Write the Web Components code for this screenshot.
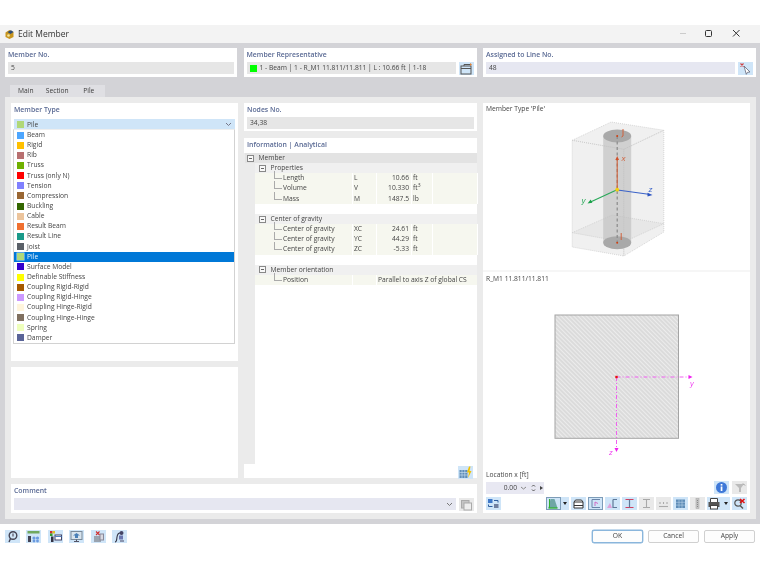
<!DOCTYPE html>
<html lang="en"><head><meta charset="utf-8"><title>Edit Member</title>
<style>
html,body{margin:0;padding:0;background:#fff;height:574px;overflow:hidden}
body{font:6.7px/10px "Open Sans","Noto Sans",sans-serif;color:#3c3c3c}
</style></head><body>
<em-dialog></em-dialog>
<script>
const ICONS={
 photo:'<rect x="2" y="4" width="10" height="8" fill="none" stroke="#555" stroke-width="1"/><path d="M2 6.5h10M5 4V2.5h7" stroke="#555" fill="none"/><path d="M11 1l2 1.500-2 1.500z" fill="#e08030"/>',
 pick:'<path d="M6 4l6 6-2.500.3-1.200 2L6 4z" fill="#fff" stroke="#667"  stroke-width=".8"/><path d="M2.500 1.500l3 3M5.500 1.500l-3 3" stroke="#d04040" stroke-width="1.100"/>',
 bolt:'<path d="M1.500 4h8v8h-8z" fill="#5f8db8"/><path d="M1.500 6.500h8M1.500 9h8M4 4v8M6.800 4v8" stroke="#cfe4f5" stroke-width=".6"/><path d="M11 .5L9 6.500h2L10 12l3.500-7h-2l1-4.500z" fill="#f2c200"/>',
 copy:'<rect x="2.500" y="2.500" width="7.500" height="7.500" fill="#c5c5c5" stroke="#aaa"/><rect x="5" y="5" width="7.500" height="7" fill="#eee" stroke="#aaa"/>',
 info:'<circle cx="7.500" cy="6.500" r="5.500" fill="#3e78d8"/><rect x="6.700" y="5.500" width="1.700" height="4.500" fill="#fff"/><rect x="6.700" y="3" width="1.700" height="1.600" fill="#fff"/>',
 filter:'<path d="M3 3h9L9 7v4H7V7z" fill="#bbb"/><path d="M11 2.500l2 2" stroke="#999"/>',
 swap:'<rect x="2" y="2" width="4.500" height="4" fill="#3f78c8"/><rect x="8" y="7" width="4.500" height="4" fill="#6f7f9f"/><path d="M8 3.500h4v2M6.500 9.500h-4v-2" fill="none" stroke="#2f5f9f"/>',
 view:'<path d="M4.500 2h4l3 9h-9z" fill="#6fa6a6"/><path d="M2.500 11h9" stroke="#30b030" stroke-width="1.300"/><path d="M3.500 2v9" stroke="#30b030" stroke-width="1"/>',
 print2:'<path d="M3 5h9v6H3zM3 5l1.500-2h6L12 5" fill="#fff" stroke="#333" stroke-width="1"/><path d="M3 8.500h9" stroke="#333"/>',
 sect1:'<path d="M4 2.500h8M4 2.500v8h8" fill="none" stroke="#6a84a8" stroke-width="1"/><path d="M7 5l3 1.500M7 5v4" stroke="#d060c0" stroke-width=".9"/>',
 sect2:'<path d="M8 2.500h4M8 2.500v8h4" fill="none" stroke="#5f7898" stroke-width="1.200"/><path d="M2 11l3-5 2 5z" fill="#e0a0d8"/>',
 sect3:'<path d="M3.500 2.500h8M3.500 10.500h8" stroke="#d04060" stroke-width="1.200"/><path d="M7.500 2.500v8" stroke="#5f7898" stroke-width="1.200"/>',
 sect4:'<path d="M4 2.500h7M4 10.500h7M7.500 2.500v8" stroke="#a8a8a8" stroke-width="1.100"/>',
 sect5:'<path d="M3 9.500h9" stroke="#aaa" stroke-width="1.100"/><path d="M4 5v2M7.500 5v2M11 5v2" stroke="#aaa" stroke-width="1.100"/>',
 grid:'<rect x="3" y="2.500" width="9" height="8.500" fill="#5f8db8"/><path d="M3 5.300h9M3 8.100h9M6 2.500v8.500M9 2.500v8.500" stroke="#b8d4ea" stroke-width=".6"/>',
 col:'<rect x="6" y="1.500" width="3" height="10" fill="#c4c4c4" stroke="#aaa" stroke-width=".6"/><path d="M7.500 3v7" stroke="#888" stroke-dasharray="1 1"/>',
 print:'<path d="M3.500 5V1.500h7V5" fill="#fff" stroke="#444"/><rect x="1.500" y="5" width="11" height="5" fill="#555"/><rect x="3.500" y="8.500" width="7" height="3.500" fill="#fff" stroke="#444"/>',
 x:'<circle cx="6" cy="6" r="3.200" fill="none" stroke="#555" stroke-width="1.200"/><path d="M8 8.500l3 3" stroke="#555" stroke-width="1.400"/><path d="M8 2l4.500 4M12.500 2L8 6" stroke="#e01010" stroke-width="1.600"/>',
 b1:'<circle cx="8" cy="5.500" r="3.800" fill="none" stroke="#445" stroke-width="1.400"/><path d="M5.500 8.500L4 12" stroke="#445" stroke-width="1.400"/><path d="M7.300 3.500h1.400v3H7.300z" fill="#667"/>',
 b2:'<rect x="1.500" y="1" width="12" height="2.500" fill="#70a860"/><rect x="2" y="6" width="3" height="6" fill="#445"/><circle cx="8" cy="8" r="1.600" fill="#6a9ae0"/><circle cx="11.500" cy="8" r="1.600" fill="#6a9ae0"/><circle cx="8" cy="11" r="1.400" fill="#6a9ae0"/><circle cx="11.500" cy="11" r="1.400" fill="#6a9ae0"/>',
 b3:'<rect x="2" y="1" width="2.500" height="2.500" fill="#d03030"/><rect x="4.500" y="1" width="2.500" height="2.500" fill="#e0c020"/><rect x="2" y="3.500" width="2.500" height="2.500" fill="#30a030"/><rect x="3" y="6.500" width="2.500" height="5.500" fill="#334"/><rect x="7" y="5" width="6.500" height="5" fill="#fff" stroke="#446"/><path d="M7 6.500h6.500" stroke="#5080c0"/>',
 b4:'<rect x="2" y="1.500" width="11" height="8" fill="#d8e4ee" stroke="#7a8a9a"/><path d="M7.500 3l3.500 2.500h-2v2.500h-3V5.500H4z" fill="#4a80b8"/><path d="M5 11.500h5M7.500 9.500v2" stroke="#556"/>',
 b5:'<rect x="3" y="6" width="7" height="6" fill="#9aa4b0"/><rect x="9" y="4" width="3.500" height="6" fill="#d8d8e0" stroke="#889"/><path d="M5 1.500l3.500 3.500M8.500 1.500L5 5" stroke="#d03030" stroke-width="1.100"/>',
 b6:'<path d="M3 12c2 0 1.500-2 2-5s1-4 3-4" fill="none" stroke="#334" stroke-width="1.100"/><rect x="7" y="5.500" width="4" height="4" fill="#6a76b0"/><circle cx="9.500" cy="3" r="2" fill="#446"/><path d="M8 11h4" stroke="#446"/>'
};
function def(name,css,render){
 customElements.define(name,class extends HTMLElement{
  connectedCallback(){
   if(this.shadowRoot)return;
   const s=this.attachShadow({mode:'open'});
   s.innerHTML='<style>'+css+'</style>'+render(this);
  }
 });
}
const a=(e,n,d='')=>e.getAttribute(n)??d;

def('em-icon',':host{display:block;flex:none;width:15px;height:13px;background:var(--b,#cfe5f8)}:host([grey]){--b:#e9e9e9}:host([flat]){--b:transparent}:host([on]){box-shadow:inset 0 0 0 1px #7d9cb8}svg{display:block;width:15px;height:13px}',
 e=>`<svg viewBox="0 0 15 13">${ICONS[a(e,'i')]||''}</svg>`);

def('em-panel',':host{display:block;background:#fff;padding:2px 3px 0;min-height:0;position:relative}h3{margin:0;font:600 6.9px/10px "Open Sans",sans-serif;color:#5a6a94;height:12px;padding-top:0}',
 e=>`<h3>${a(e,'t')}</h3><slot></slot>`);

def('em-input',':host{display:flex;align-items:center;height:12px;background:var(--bg,#e6e6e6);padding-left:3px;gap:3px;flex:1;min-width:0;color:#444}:host([lilac]){--bg:#e6e7f1}i{width:7px;height:7px;background:#0f0;display:block}svg{margin-left:auto;margin-right:3px}',
 e=>`${e.hasAttribute('sw')?'<i></i>':''}<slot></slot>${e.hasAttribute('dd')?'<svg width="7" height="5" viewBox="0 0 7 5"><path d="M1 1l2.500 2.500L6 1" fill="none" stroke="#777"/></svg>':''}`);

def('em-row',':host{display:flex;gap:3px}',()=>'<slot></slot>');

def('em-tabs',':host{display:flex;height:12px;margin-top:8px;margin-left:5px}span{width:31.500px;text-align:center;background:#dfdfe3;line-height:12px}span:first-child{background:#ebebeb;width:32px}',
 ()=>'<span>Main</span><span>Section</span><span>Pile</span>');

def('em-type-item',':host{display:flex;align-items:center;height:10.150px;padding-left:2.500px;gap:3.500px;color:#444;white-space:nowrap}:host([sel]){background:#0078d7;color:#e9f3fb}i{display:block;width:7px;height:7px;background:var(--c);box-shadow:0 0 0 .5px rgba(255,255,255,.7)}',
 e=>`<i style="--c:${a(e,'c')}"></i><slot></slot>`);

def('em-type-select',':host{display:flex;align-items:center;height:11px;margin:2px 0 0 0;background:#cfe5f8;padding-left:2.500px;gap:3.500px;color:#444}i{width:7px;height:7px;background:#b0d878;display:block}svg{margin-left:auto;margin-right:3px}',
 ()=>'<i></i><slot></slot><svg width="7" height="5" viewBox="0 0 7 5"><path d="M1 1l2.500 2.500L6 1" fill="none" stroke="#778"/></svg>');

def('em-type-list',':host{position:absolute;left:2px;top:26px;width:220px;background:#fff;border:1px solid #d2d2d2;border-top-color:#eee;z-index:3;padding-top:0}',()=>'<slot></slot>');

const GRID='display:grid;grid-template-columns:97px 24px 35px 21px 1fr;';
def('em-head',':host{display:flex;align-items:center;height:10.170px;background:#f0f0f0;margin-left:0;color:#444;position:relative;white-space:nowrap}:host([top]){background:#e3e3e3;margin-left:-10px;padding-left:2px}:host(:not([top])){padding-left:4px}b{display:block;width:5px;height:5px;border:.7px solid #888;background:#f8f8f8;position:relative;margin-right:4.500px}b:after{content:"";position:absolute;left:1px;right:1px;top:2.100px;height:.7px;background:#666}',
 ()=>'<b></b><slot></slot>');
def('em-cells',`:host{${GRID}height:10.170px;background:#f6f7ef;color:#444;position:relative;white-space:nowrap}span{box-shadow:1px 0 0 #fff;display:block;line-height:10.170px}.l{padding-left:28px}.l:before{content:"";position:absolute;left:19px;top:5px;width:8px;height:.7px;background:#aaa}.l:after{content:"";position:absolute;left:19px;top:-2px;width:.7px;height:7px;background:#aaa}.s{padding-left:2px}.v{text-align:right;padding-right:2px}.u{padding-left:2px}sup{font-size:5px;line-height:0}.p{grid-column:3/6;padding-left:2px;box-shadow:none}`,
 e=>{const p=a(e,'p');return p?`<span class="l">${a(e,'l')}</span><span class="s"></span><span class="p">${p}</span>`:
 `<span class="l">${a(e,'l')}</span><span class="s">${a(e,'s')}</span><span class="v">${a(e,'v')}</span><span class="u">${a(e,'u')}</span><span></span>`;});
def('em-gap',':host{display:block;height:10.170px;background:#fff}',()=>'');

def('em-tree',':host{display:block;height:311px;margin:1px -3px 0;padding-left:11px;background:linear-gradient(90deg,#ebebeb 11px,#fff 11px)}',()=>'<slot></slot>');

def('em-pile',':host{display:block;height:150px;margin-top:0}svg{display:block;margin:0 auto}text{font:italic 8px "Liberation Sans",sans-serif}',()=>`
<svg width="160" height="150" viewBox="536.500 112 160 150">
<g fill="#dcdcdc" fill-opacity=".42" stroke="#c8c8c8" stroke-width=".7" stroke-dasharray="1 1">
<path d="M571.700 138.300L610.700 120L663.300 128.300L623.300 147.300z"/>
<path d="M571.700 138.300L623.300 147.300V254L571.700 245z"/>
<path d="M623.300 147.300L663.300 128.300V230L623.300 254z"/>
<path d="M571.700 230.700L611.700 213L663.300 221.700L623.300 240z"/>
</g>
<path d="M602.700 134V240.700H630.700V134z" fill="#bdbdbd" fill-opacity=".62"/>
<ellipse cx="616.700" cy="134" rx="14" ry="6.500" fill="#a9a9a9"/>
<ellipse cx="616.700" cy="240.700" rx="14" ry="6.500" fill="#a9a9a9"/>
<path d="M616.700 134V241" stroke="#8a8a8a" stroke-width="1.200" stroke-dasharray="3 2.500"/>
<path d="M616.700 187V157" stroke="#d0603a" stroke-width="1.100"/><path d="M616.700 154l-1.800 4h3.600z" fill="#d0502a"/>
<path d="M617 188l31 4.300" stroke="#3a62c8" stroke-width="1.100"/><path d="M652 193l-5-2.200v3.600z" fill="#2a52c0"/>
<path d="M616 188l-26 12" stroke="#28a858" stroke-width="1.100"/><path d="M587 201.500l4.800-.8-1.600-3.200z" fill="#18a048"/>
<circle cx="616.700" cy="187.700" r="1.900" fill="#f4d010"/>
<circle cx="616.700" cy="134" r="1" fill="#d04010"/><circle cx="616.700" cy="240.700" r="1" fill="#d04010"/>
<path d="M622.500 127v7l-1.500 1" stroke="#d0603a" fill="none"/><path d="M620.700 231v7" stroke="#d0603a"/>
<text x="621" y="159" fill="#d0603a">x</text><text x="648" y="190" fill="#3a62c8">z</text><text x="581" y="201" fill="#28a858">y</text>
</svg>`);

def('em-section',':host{display:block;height:185px}svg{display:block;margin:0 auto}text{font:italic 7.500px "Liberation Sans",sans-serif;fill:#f040f0}',()=>`
<svg width="261" height="185" viewBox="487.500 285 261 185">
<defs><pattern id="h" width="3" height="3" patternUnits="userSpaceOnUse" patternTransform="rotate(45)"><rect width="3" height="3" fill="#dbdbdb"/><rect width="3" height="1" fill="#ececec"/></pattern></defs>
<rect x="556.500" y="316" width="123.500" height="123.300" fill="url(#h)" stroke="#a4a4a4" stroke-width="1"/>
<path d="M618 378H691" stroke="#f060f0" stroke-width="1" stroke-dasharray="4 2 1 2"/><path d="M694 378l-4-2v4z" fill="#f020f0"/>
<path d="M618 378V450" stroke="#f060f0" stroke-width="1" stroke-dasharray="4 2 1 2"/><path d="M618 453l-2-4h4z" fill="#f020f0"/>
<rect x="616.800" y="376.800" width="2.400" height="2.400" fill="#e81010"/>
<text x="691.500" y="387">y</text><text x="610.500" y="456">z</text>
</svg>`);

def('em-spin',':host{display:flex;align-items:center;width:58px;height:12px;background:#e8e8f2;color:#444;flex:none}span{width:31px;text-align:right}svg{display:block}',
 ()=>'<span><slot></slot></span><svg width="27" height="12" viewBox="0 0 27 12"><path d="M4 5l2.500 2L9 5" fill="none" stroke="#888"/><path d="M15 4.500l1.500-1.500 1.500 1.500M15 7.500l1.500 1.500 1.500-1.500" fill="none" stroke="#555"/><path d="M23 4l3 2-3 2z" fill="#444"/></svg>');

def('em-preview',':host{display:flex;flex-direction:column;background:#fff;grid-row:1/4;grid-column:3;padding:0;min-height:0}.t{height:10px;margin:1px 3px 0;line-height:10px;color:#444}.d{height:2px;background:#f6f6f6;margin-top:5px}.foot{padding:0 3px;margin-top:0}.l{height:11px;line-height:11px;margin-bottom:1px;color:#444}.r{display:flex;align-items:center;gap:3px}.tb{display:flex;margin-top:3px;align-items:center}.sp{flex:1}.ar{width:8px;height:13px;background:#cfe5f8;display:flex;align-items:center;justify-content:center;margin-right:2px}.ar:after{content:"";border:2px solid transparent;border-top:3px solid #222;border-bottom:0}.g{display:flex;gap:2px}',()=>`
<div class="t">Member Type 'Pile'</div><em-pile></em-pile><div class="d" style="margin-top:6px"></div>
<div class="t" style="margin-top:2px">R_M1 11.811/11.811</div><em-section></em-section>
<div class="foot"><div class="l">Location x [ft]</div>
<div class="r"><em-spin>0.00</em-spin><span class="sp"></span><em-icon i="info"></em-icon><em-icon i="filter" grey></em-icon></div>
<div class="tb"><em-icon i="swap"></em-icon><span class="sp"></span>
<div class="g"><div style="display:flex"><em-icon i="view" on></em-icon><div class="ar" style="margin:0"></div></div>
<em-icon i="print2"></em-icon><em-icon i="sect1" on></em-icon><em-icon i="sect2"></em-icon><em-icon i="sect3"></em-icon><em-icon i="sect4" grey></em-icon><em-icon i="sect5" grey></em-icon><em-icon i="grid"></em-icon><em-icon i="col" grey></em-icon>
<div style="display:flex"><em-icon i="print"></em-icon><div class="ar" style="margin:0"></div></div><em-icon i="x"></em-icon></div></div></div>`);

def('em-titlebar',':host{display:flex;align-items:center;height:18px;background:#f3f3f3;padding-left:5px;color:#333;font-size:8.500px}span{margin-left:4px;flex:1}svg{display:block}.w{margin-right:15px}',()=>`
<svg width="9" height="10" viewBox="0 0 9 10"><path d="M.5 3.500L4.500 1l4 2v5l-4 2-4-2z" fill="#c8951e"/><path d="M2.500 3L6 1.200 8.500 3l-3 2z" fill="#2f4d78"/><circle cx="3.500" cy="6.500" r="1.300" fill="#f4e7a0"/></svg><span>Edit Member</span>
<svg class="w" style="margin-right:0" width="74" height="18" viewBox="0 0 74 18"><path d="M4 8.500h6" stroke="#ccc"/><rect x="29.500" y="5.500" width="6" height="6" rx="1" fill="none" stroke="#333"/><path d="M57 5l6.500 6.500M63.500 5L57 11.500" stroke="#333"/></svg><i style="width:10px"></i>`);

def('em-btn',':host{display:flex;width:51px;height:13px;align-items:center;justify-content:center;background:#fdfdfd;border:1px solid #d0d0d0;border-radius:2px;box-sizing:border-box;color:#444}:host([def]){border-color:#8ab6dc;box-shadow:0 0 0 .4px #8ab6dc}',()=>'<slot></slot>');

const TYPES=[['Beam','#4da6ff'],['Rigid','#ffc000'],['Rib','#b87070'],['Truss','#70b000'],['Truss (only N)','#ff0000'],['Tension','#8080ff'],['Compression','#996633'],['Buckling','#336600'],['Cable','#ecc49c'],['Result Beam','#f07030'],['Result Line','#1a9a8a'],['Joist','#5a6068'],['Pile','#b0d878'],['Surface Model','#3300cc'],['Definable Stiffness','#ffff00'],['Coupling Rigid-Rigid','#a65a00'],['Coupling Rigid-Hinge','#cc99ff'],['Coupling Hinge-Rigid','#fff5dc'],['Coupling Hinge-Hinge','#807060'],['Spring','#eeffbb'],['Damper','#5a6498']];

def('em-dialog',`:host{display:block;margin-top:25px;filter:blur(.3px)}
.body{background:#d3d3d7;height:481px;box-sizing:border-box;padding:5px 4px 0 5px;display:flex;flex-direction:column}
.top{display:grid;grid-template-columns:232px 233px 273px;column-gap:6.500px;height:29px}
.content{background:#ebebeb;height:422px;box-sizing:border-box;padding:6px 6px 5px 6px;display:grid;grid-template-columns:227px 233px 267px;grid-template-rows:258px 111px 29px;column-gap:6px;row-gap:6px}
.col{display:flex;flex-direction:column;gap:7px;grid-column:2;grid-row:1/3;min-height:0}
.nodes{height:28px;box-sizing:border-box}
.info{height:340px;box-sizing:border-box}
.corner{display:flex;justify-content:flex-end;padding:2px 1px 0 0}
.bottom{display:flex;align-items:center;height:24px;padding:0 5px;gap:6.400px;background:#fff}
.sp{flex:1}.btns{display:flex;gap:5px}
`,()=>`
<em-titlebar></em-titlebar>
<div class="body">
<div class="top">
<em-panel t="Member No."><em-row><em-input>5</em-input></em-row></em-panel>
<em-panel t="Member Representative"><em-row><em-input sw>1 - Beam | 1 - R_M1 11.811/11.811 | L : 10.66 ft | 1-18</em-input><em-icon i="photo"></em-icon></em-row></em-panel>
<em-panel t="Assigned to Line No."><em-row><em-input lilac>48</em-input><em-icon i="pick"></em-icon></em-row></em-panel>
</div>
<em-tabs></em-tabs>
<div class="content">
<em-panel t="Member Type"><em-type-select>Pile</em-type-select><em-type-list>${TYPES.map(t=>`<em-type-item c="${t[1]}"${t[0]==='Pile'?' sel':''}>${t[0]}</em-type-item>`).join('')}</em-type-list></em-panel>
<em-panel style="grid-column:1;grid-row:2"></em-panel>
<div class="col">
<em-panel class="nodes" t="Nodes No."><em-input>34,38</em-input></em-panel>
<em-panel class="info" t="Information | Analytical"><em-tree>
<em-head top>Member</em-head><em-head>Properties</em-head>
<em-cells l="Length" s="L" v="10.66" u="ft"></em-cells>
<em-cells l="Volume" s="V" v="10.330" u="ft<sup>3</sup>"></em-cells>
<em-cells l="Mass" s="M" v="1487.5" u="lb"></em-cells><em-gap></em-gap>
<em-head>Center of gravity</em-head>
<em-cells l="Center of gravity" s="XC" v="24.61" u="ft"></em-cells>
<em-cells l="Center of gravity" s="YC" v="44.29" u="ft"></em-cells>
<em-cells l="Center of gravity" s="ZC" v="-5.33" u="ft"></em-cells><em-gap></em-gap>
<em-head>Member orientation</em-head>
<em-cells l="Position" p="Parallel to axis Z of global CS"></em-cells>
</em-tree><div class="corner"><em-icon i="bolt"></em-icon></div></em-panel>
</div>
<em-preview></em-preview>
<em-panel t="Comment" style="grid-column:1/3;grid-row:3"><em-row><em-input lilac dd></em-input><em-icon i="copy" grey></em-icon></em-row></em-panel>
</div>
</div>
<div class="bottom">
<em-icon i="b1"></em-icon><em-icon i="b2"></em-icon><em-icon i="b3"></em-icon><em-icon i="b4"></em-icon><em-icon i="b5"></em-icon><em-icon i="b6"></em-icon>
<span class="sp"></span><div class="btns"><em-btn def>OK</em-btn><em-btn>Cancel</em-btn><em-btn>Apply</em-btn></div>
</div>`);
</script>
</body></html>
